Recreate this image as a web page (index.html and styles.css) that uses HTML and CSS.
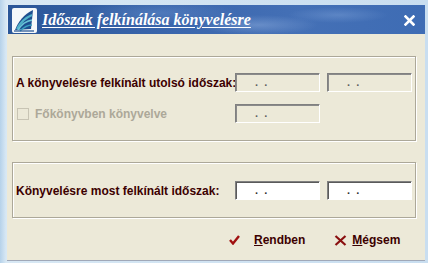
FILE: index.html
```html
<!DOCTYPE html>
<html>
<head>
<meta charset="utf-8">
<link rel="stylesheet" href="styles.css">
</head>
<body>
<div class="frame">
  <div class="titlebar">
    <svg class="logo" width="25" height="25" viewBox="0 0 25 25">
      <rect x="0" y="0" width="25" height="25" rx="2" fill="#f4f8fa"/>
      <path d="M3 22 C6 14 12 6 21 2 L19 21 Z" fill="#1d4f8f"/>
      <path d="M5 21 C8 15 13 10 20 7" stroke="#4fb0c8" stroke-width="2" fill="none"/>
      <path d="M6 22 C9 17 14 13 20 12" stroke="#6ac6d8" stroke-width="1.6" fill="none"/>
      <path d="M8 23 C11 20 15 17 20 17" stroke="#3aa0c0" stroke-width="1.4" fill="none"/>
      <path d="M2 23 L22 23" stroke="#1d4f8f" stroke-width="1.2"/>
    </svg>
    <span class="title">Időszak felkínálása könyvelésre</span>
    <svg class="close" width="11" height="11" viewBox="0 0 11 11"><path d="M1.5 1.5 L9.5 9.5 M9.5 1.5 L1.5 9.5" stroke="#ffffff" stroke-width="2.6" stroke-linecap="square" fill="none"/></svg>
  </div>
  <div class="body">
    <div class="group g1">
      <div class="row">
        <span class="label">A könyvelésre felkínált utolsó időszak:</span>
        <div class="field disabled">.&nbsp;&nbsp;.</div>
        <div class="field disabled">.&nbsp;&nbsp;.</div>
      </div>
      <div class="row">
        <span class="check"><span class="box"></span><span class="clabel">Főkönyvben könyvelve</span></span>
        <div class="field disabled">.&nbsp;&nbsp;.</div>
      </div>
    </div>
    <div class="group g2">
      <div class="row">
        <span class="label">Könyvelésre most felkínált időszak:</span>
        <div class="field">.&nbsp;&nbsp;.</div>
        <div class="field">.&nbsp;&nbsp;.</div>
      </div>
    </div>
    <div class="buttons">
      <span class="btn ok">
        <svg width="11" height="10" viewBox="0 0 11 10"><path d="M1 5 L4 8.5 L10 1" stroke="#a01010" stroke-width="2.4" fill="none"/></svg>
        <span class="btext"><u>R</u>endben</span>
      </span>
      <span class="btn cancel">
        <svg width="13" height="11" viewBox="0 0 13 11"><path d="M1.5 1 L11.5 10 M11.5 1 L1.5 10" stroke="#8a1010" stroke-width="2.2" fill="none"/></svg>
        <span class="btext"><u>M</u>égsem</span>
      </span>
    </div>
  </div>
</div>
</body>
</html>
```
FILE: styles.css
```css
html, body {
  margin: 0;
  padding: 0;
}
body {
  width: 428px;
  height: 263px;
  overflow: hidden;
  background: #c4dcee;
  font-family: "Liberation Sans", Arial, sans-serif;
}
.frame {
  width: 428px;
  height: 263px;
  box-sizing: border-box;
  padding: 5px 3px 2px 7px;
  display: flex;
  flex-direction: column;
  background: linear-gradient(90deg, #b6d2ea 0px, #d8e8f4 6px, #c9def0 100%);
}
.titlebar {
  height: 29px;
  flex: none;
  display: flex;
  align-items: center;
  padding-left: 4px;
  padding-right: 10px;
  border-left: 1px solid #e8f0f8;
  background:
    radial-gradient(ellipse 60px 10px at 250px 20px, rgba(150,180,225,0.45), transparent),
    radial-gradient(ellipse 80px 12px at 150px 8px, rgba(120,160,215,0.35), transparent),
    radial-gradient(ellipse 50px 8px at 330px 10px, rgba(140,175,225,0.35), transparent),
    linear-gradient(90deg, #2a5698 0%, #3a66ad 40%, #4470b6 70%, #3e6cb4 100%);
}
.logo {
  flex: none;
  margin-top: 1px;
}
.title {
  font-family: "Liberation Serif", "Times New Roman", serif;
  font-style: italic;
  font-weight: bold;
  font-size: 16px;
  color: #ffffff;
  text-decoration: underline;
  text-underline-offset: 2px;
  margin-left: 5px;
  flex: 1;
}
.close {
  flex: none;
  margin-top: 1px;
}
.body {
  flex: 1;
  background: #ece9d8;
  padding: 22px 8px 0 5px;
  border-bottom: 1px solid #a0a8b8;
}
.group {
  width: 404px;
  box-sizing: border-box;
  border: 1px solid #aca899;
  box-shadow: inset 1px 1px #ffffff, 1px 1px #ffffff;
  padding-left: 3px;
}
.g1 {
  height: 85px;
  padding-top: 16px;
}
.g2 {
  height: 56px;
  margin-top: 21px;
  padding-top: 18px;
}
.row {
  display: flex;
  align-items: center;
  height: 19px;
}
.g1 .row + .row {
  margin-top: 12px;
}
.label {
  width: 219px;
  flex: none;
  font-weight: bold;
  font-size: 12px;
  color: #3c0000;
  white-space: nowrap;
}
.check {
  width: 219px;
  flex: none;
  display: flex;
  align-items: center;
}
.box {
  width: 10px;
  height: 10px;
  border: 1px solid #c8c4b4;
  background: #ece9d8;
  margin-left: 1px;
  margin-right: 6px;
}
.clabel {
  font-weight: bold;
  font-size: 12px;
  color: #aca899;
}
.field {
  width: 85px;
  height: 19px;
  flex: none;
  box-sizing: border-box;
  border-top: 1px solid #808080;
  border-left: 1px solid #808080;
  border-bottom: 1px solid #ffffff;
  border-right: 1px solid #ffffff;
  box-shadow: inset 1px 1px #5a5a5a;
  background: #ffffff;
  font-size: 11px;
  font-weight: bold;
  color: #303030;
  padding-left: 19px;
  line-height: 16px;
  margin-right: 7px;
}
.field.disabled {
  background: #ece9d8;
  color: #606060;
  box-shadow: inset 1px 1px #8a8a8a;
}
.buttons {
  display: flex;
  padding-left: 217px;
  margin-top: 15px;
}
.btn {
  display: flex;
  align-items: center;
}
.ok {
  gap: 14px;
}
.cancel {
  gap: 5px;
  margin-left: 29px;
}
.btext {
  font-weight: bold;
  font-size: 12px;
  color: #3c0000;
}
```
